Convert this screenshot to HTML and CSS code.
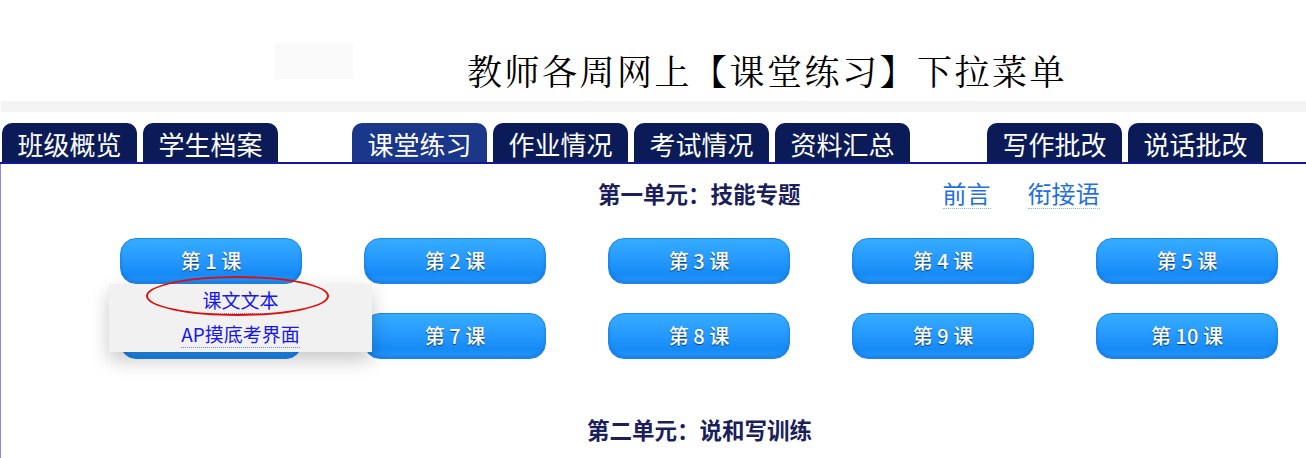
FILE: index.html
```html
<!DOCTYPE html>
<html lang="zh-CN">
<head>
<meta charset="utf-8">
<title>课堂练习</title>
<link rel="stylesheet" href="styles.css">
</head>
<body>
<div class="header">
  <div class="logo"></div>
  <h1 class="title">教师各周网上【课堂练习】下拉菜单</h1>
</div>
<div class="strip"></div>
<nav class="tabs">
  <a class="tab">班级概览</a>
  <a class="tab">学生档案</a>
  <a class="tab active group">课堂练习</a>
  <a class="tab">作业情况</a>
  <a class="tab">考试情况</a>
  <a class="tab">资料汇总</a>
  <a class="tab group2">写作批改</a>
  <a class="tab">说话批改</a>
</nav>
<main class="content">
  <div class="unit-row">
    <h2 class="unit">第一单元：技能专题</h2>
    <a class="link first">前言</a>
    <a class="link">衔接语</a>
  </div>
  <div class="lessons">
    <div class="cell">
      <a class="btn">第 1 课</a>
      <div class="dropdown">
        <div class="item"><span>课文文本</span></div>
        <div class="item"><span>AP摸底考界面</span></div>
        <div class="ring"></div>
      </div>
    </div>
    <div class="cell"><a class="btn">第 2 课</a></div>
    <div class="cell"><a class="btn">第 3 课</a></div>
    <div class="cell"><a class="btn">第 4 课</a></div>
    <div class="cell"><a class="btn">第 5 课</a></div>
    <div class="cell"><a class="btn covered"></a></div>
    <div class="cell"><a class="btn">第 7 课</a></div>
    <div class="cell"><a class="btn">第 8 课</a></div>
    <div class="cell"><a class="btn">第 9 课</a></div>
    <div class="cell"><a class="btn">第 10 课</a></div>
  </div>
  <div class="unit-row second">
    <h2 class="unit">第二单元：说和写训练</h2>
  </div>
</main>
</body>
</html>
```
FILE: styles.css
```css
html, body {
  margin: 0;
  padding: 0;
  background: #ffffff;
  font-family: "Noto Sans CJK SC", "Liberation Sans", sans-serif;
}
.header {
  height: 101px;
  display: flex;
  align-items: flex-start;
  padding-left: 275px;
  box-sizing: border-box;
}
.logo {
  width: 78px;
  height: 36px;
  margin-top: 43px;
  background: #fafafa;
}
.title {
  margin: 50px 0 0 114px;
  font-family: "AR PL UKai CN", "Noto Serif CJK SC", "Noto Sans CJK SC", serif;
  font-weight: normal;
  font-size: 35px;
  line-height: 40px;
  letter-spacing: 2.5px;
  color: #000;
  white-space: nowrap;
}
.strip {
  height: 11px;
  margin-left: 1px;
  background: #f4f4f4;
}
.tabs {
  display: flex;
  margin-top: 11px;
  height: 39px;
  padding-left: 2px;
  border-bottom: 2px solid #15179a;
}
.tab {
  width: 135px;
  margin-right: 6px;
  background: #0b1b57;
  color: #ffffff;
  border-radius: 10px 10px 0 0;
  font-size: 26px;
  font-weight: normal;
  line-height: 41px;
  text-align: center;
  white-space: nowrap;
}
.tab.active {
  background: #1a3789;
}
.tab.group {
  margin-left: 68px;
}
.tab.group2 {
  margin-left: 71px;
}
.content {
  border-left: 1px solid #8a8ae6;
  height: 294px;
}
.unit-row {
  display: flex;
  align-items: center;
  height: 30px;
  padding-top: 14px;
  padding-left: 597px;
}
.unit {
  margin: 0;
  font-size: 22.5px;
  font-weight: bold;
  color: #1b1e5c;
  white-space: nowrap;
}
.link {
  font-size: 24px;
  line-height: 30px;
  color: #1f6fe3;
  border-bottom: 1px dotted #8fb0f0;
  margin-left: 37px;
  white-space: nowrap;
}
.link.first {
  margin-left: 142px;
}
.unit-row.second {
  padding-top: 55px;
  padding-left: 586px;
}
.lessons {
  display: grid;
  grid-template-columns: repeat(5, 182px);
  column-gap: 62px;
  row-gap: 29px;
  margin-top: 30px;
  padding-left: 119px;
}
.cell {
  position: relative;
}
.btn {
  display: block;
  height: 44px;
  border: 1px solid #1f86e8;
  border-radius: 16px;
  background: linear-gradient(#36acff 0%, #269aff 45%, #168bf6 80%, #2798fb 100%);
  box-shadow: inset 0 -2px 3px rgba(0, 60, 160, 0.25);
  color: #ffffff;
  font-family: "Noto Sans CJK SC", "Liberation Sans", sans-serif;
  font-size: 20px;
  font-weight: 500;
  line-height: 44px;
  text-align: center;
  text-shadow: 0 1px 1px rgba(0, 0, 0, 0.6);
}
.dropdown {
  position: absolute;
  left: -11px;
  top: 46px;
  width: 263px;
  height: 68px;
  background: #f1f1f1;
  box-shadow: 0 8px 18px rgba(0, 0, 0, 0.22);
  z-index: 2;
}
.item {
  height: 34px;
  line-height: 32px;
  text-align: center;
  font-size: 19px;
  font-weight: normal;
  color: #1717ee;
}
.item span {
  border-bottom: 1px dotted #7a7af0;
}
.ring {
  position: absolute;
  left: 37px;
  top: -8px;
  width: 179px;
  height: 36px;
  border: 2.5px solid #e00d0d;
  border-radius: 50%;
}
```
